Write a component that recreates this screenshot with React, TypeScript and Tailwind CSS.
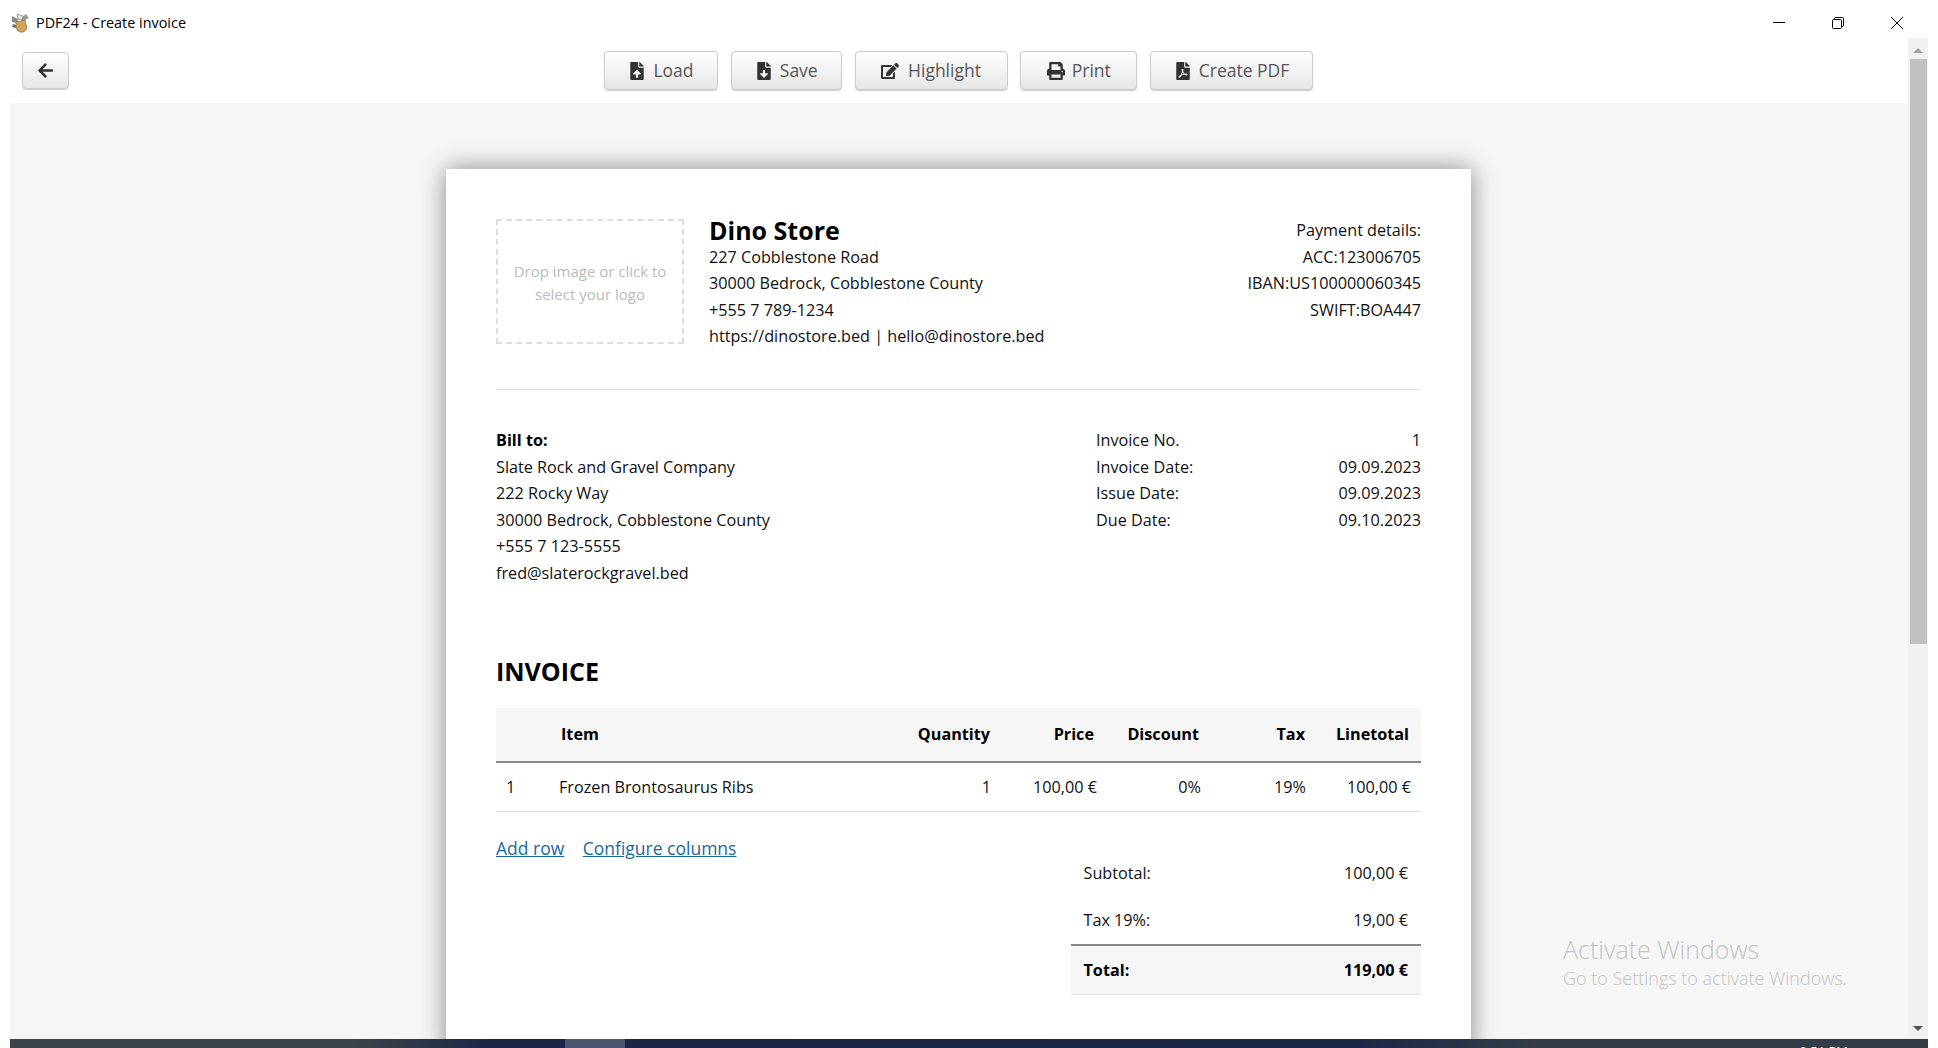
import React from 'react';
import { FaArrowLeft, FaEdit, FaFileDownload, FaFilePdf, FaFileUpload, FaPrint } from 'react-icons/fa';

const toolbarButtons = [
  { label: 'Load', icon: FaFileUpload, className: 'w-[114px] gap-[7px]' },
  { label: 'Save', icon: FaFileDownload, className: 'w-[111px] gap-[7px]' },
  { label: 'Highlight', icon: FaEdit, className: 'w-[153px] gap-[9px]' },
  { label: 'Print', icon: FaPrint, className: 'w-[117px] gap-[7px]' },
  { label: 'Create PDF', icon: FaFilePdf, className: 'w-[163px] gap-[7px]' },
];

const AppLogo = () => (
  <svg width="19" height="20" viewBox="0 0 19 20" className="shrink-0">
    <path d="M1 3 L7 6 L6 10 L1 9 Z" fill="#8a8a8a" />
    <path d="M15 1 L18 5 L12 8 L10 5 Z" fill="#9a9a9a" />
    <path d="M6 1 L12 3 L11 7 L7 6 Z" fill="#e6e6e6" stroke="#555" strokeWidth="0.5" />
    <path d="M5 9 L14 7 L16 15 Q14 20 9 19 Q5 18 5 13 Z" fill="#d3a35c" stroke="#7a5a2c" strokeWidth="0.6" />
    <path d="M2 11 L5 12 L5 15 L1 14 Z" fill="#6d6d6d" />
  </svg>
);

const ToolbarButton = ({ children, className }: { children: React.ReactNode; className: string }) => (
  <button className={`flex items-center justify-center rounded-[4px] border border-[#ccc] bg-gradient-to-b from-white to-[#e6e6e6] text-[17.5px] text-[#555] shadow-[0_1px_1px_rgba(0,0,0,0.2)] ${className}`}>
    {children}
  </button>
);

const metaRows = [
  ['Invoice No.', '1'],
  ['Invoice Date:', '09.09.2023'],
  ['Issue Date:', '09.09.2023'],
  ['Due Date:', '09.10.2023'],
];

const App = () => {
  return (
    <div className="h-screen w-full flex flex-col overflow-hidden bg-white font-['Open_Sans',sans-serif] text-[16.2px] leading-[26.5px] text-[#111]">
      {/* Title bar */}
      <div className="h-[38px] shrink-0 flex items-center pt-[8px] pl-[11px]">
        <AppLogo />
        <span className="ml-[6px] text-[14.4px] text-black">PDF24 - Create invoice</span>
        <div className="ml-auto flex items-center pr-[35px] gap-[47px]">
          <svg width="12" height="12" viewBox="0 0 12 12"><path d="M0 5.5H12" stroke="#000" /></svg>
          <svg width="12" height="12" viewBox="0 0 12 12" fill="none" stroke="#000">
            <rect x="0.5" y="2.5" width="9" height="9" rx="1" />
            <path d="M2.5 2.5V1.5a1 1 0 0 1 1-1h7a1 1 0 0 1 1 1v7a1 1 0 0 1-1 1h-1" />
          </svg>
          <svg width="12" height="12" viewBox="0 0 12 12"><path d="M0 0L12 12M12 0L0 12" stroke="#000" /></svg>
        </div>
      </div>

      <div className="flex-1 min-h-0 flex pl-[10px] pr-[10px]">
        <div className="flex-1 min-w-0 flex flex-col">
          {/* Toolbar */}
          <div className="h-[65px] shrink-0 relative flex items-start pt-[13px] pl-[12px]">
            <ToolbarButton className="w-[47px] h-[37px] mt-px">
              <FaArrowLeft className="text-[17px] text-[#333]" />
            </ToolbarButton>
            <div className="flex gap-[12.75px] ml-[535px]">
              {toolbarButtons.map(({ label, icon: Icon, className }) => (
                <ToolbarButton key={label} className={`h-[39px] ${className}`}>
                  <Icon className="text-[18px] text-[#333]" />
                  {label}
                </ToolbarButton>
              ))}
            </div>
          </div>

          {/* Scrolling document area */}
          <div className="flex-1 min-h-0 overflow-hidden relative bg-[#f6f6f6] pt-[66px]">
            <div className="w-[1025px] ml-[436px] bg-white px-[50px] pt-[48px] pb-[60px] shadow-[0_0_24px_rgba(0,0,0,0.45)]">
              <div className="flex items-start">
                <div className="mt-[2px] h-[125px] w-[188px] shrink-0 flex items-center justify-center border-2 border-dashed border-[#ddd] px-[12px] pt-[2px] text-center text-[15px] leading-[23px] text-[#bbb]">
                  Drop image or click to select your logo
                </div>
                <div className="ml-[25px]">
                  <div className="text-[25px] font-bold text-black">Dino Store</div>
                  <div>227 Cobblestone Road</div>
                  <div>30000 Bedrock, Cobblestone County</div>
                  <div>+555 7 789-1234</div>
                  <div>https://dinostore.bed | hello@dinostore.bed</div>
                </div>
                <div className="ml-auto text-right">
                  <div>Payment details:</div>
                  <div>ACC:123006705</div>
                  <div>IBAN:US100000060345</div>
                  <div>SWIFT:BOA447</div>
                </div>
              </div>

              <div className="mt-[39px] border-t border-[#e2e2e2]" />

              <div className="mt-[37.5px] flex items-start justify-between">
                <div>
                  <div className="font-bold text-black">Bill to:</div>
                  <div>Slate Rock and Gravel Company</div>
                  <div>222 Rocky Way</div>
                  <div>30000 Bedrock, Cobblestone County</div>
                  <div>+555 7 123-5555</div>
                  <div>fred@slaterockgravel.bed</div>
                </div>
                <div className="w-[325px]">
                  {metaRows.map(([label, value]) => (
                    <div key={label} className="flex justify-between">
                      <span>{label}</span>
                      <span>{value}</span>
                    </div>
                  ))}
                </div>
              </div>

              <h2 className="mt-[68.5px] text-[25px] font-bold leading-[32px] text-black">INVOICE</h2>

              <table className="mt-[21px] w-full table-fixed border-collapse">
                <colgroup>
                  <col className="w-[60px]" />
                  <col />
                  <col className="w-[105px]" />
                  <col className="w-[105px]" />
                  <col className="w-[105px]" />
                  <col className="w-[105px]" />
                  <col className="w-[105px]" />
                </colgroup>
                <thead>
                  <tr className="h-[54px] bg-[#f6f6f6] border-b-2 border-[#888] font-bold text-black">
                    <th />
                    <th className="text-left font-bold pl-[5px]">Item</th>
                    <th className="text-right font-bold pr-[11px]">Quantity</th>
                    <th className="text-right font-bold pr-[12px]">Price</th>
                    <th className="text-right font-bold pr-[12px]">Discount</th>
                    <th className="text-right font-bold pr-[11px]">Tax</th>
                    <th className="text-right font-bold pr-[12px]">Linetotal</th>
                  </tr>
                </thead>
                <tbody>
                  <tr className="h-[50px] border-b border-[#e2e2e2]">
                    <td className="pl-[10px]">1</td>
                    <td className="pl-[3px]">Frozen Brontosaurus Ribs</td>
                    <td className="text-right pr-[10px]">1</td>
                    <td className="text-right pr-[9px]">100,00 €</td>
                    <td className="text-right pr-[10px]">0%</td>
                    <td className="text-right pr-[10px]">19%</td>
                    <td className="text-right pr-[10px]">100,00 €</td>
                  </tr>
                </tbody>
              </table>

              <div className="flex items-start justify-between">
                <div className="mt-[23px] flex gap-[18.5px] text-[#1a6a9e]">
                  <a className="underline text-[17.5px]">Add row</a>
                  <a className="underline text-[17.5px]">Configure columns</a>
                </div>
                <div className="mt-[37px] w-[350px]">
                  <div className="h-[48px] flex items-center justify-between pl-[12.5px] pr-[13px]">
                    <span>Subtotal:</span>
                    <span>100,00 €</span>
                  </div>
                  <div className="h-[47px] flex items-center justify-between pl-[12.5px] pr-[13px]">
                    <span>Tax 19%:</span>
                    <span>19,00 €</span>
                  </div>
                  <div className="h-[51px] flex items-center justify-between pl-[12.5px] pr-[13px] bg-[#f6f6f6] border-t-2 border-t-[#888] border-b border-b-[#e2e2e2] font-bold text-black">
                    <span>Total:</span>
                    <span>119,00 €</span>
                  </div>
                </div>
              </div>
            </div>

            {/* Windows activation watermark */}
            <div className="absolute left-[1553px] top-[830px] font-['Open_Sans',sans-serif] font-light text-[#c2c2c2]">
              <div className="text-[25px] leading-[32px]">Activate Windows</div>
              <div className="text-[18px] leading-[26px] whitespace-nowrap">Go to Settings to activate Windows.</div>
            </div>
          </div>
        </div>

        {/* Scrollbar */}
        <div className="w-[20px] shrink-0 flex flex-col items-center bg-[#f1f1f1]">
          <div className="h-[21px] w-full flex items-center justify-center pt-[4px]">
            <div className="w-0 h-0 border-x-[5px] border-x-transparent border-b-[5px] border-b-[#a3a3a3]" />
          </div>
          <div className="h-[585px] w-[17px] bg-[#c1c1c1]" />
          <div className="mt-auto h-[21px] w-full flex items-center justify-center">
            <div className="w-0 h-0 border-x-[5px] border-x-transparent border-t-[5px] border-t-[#505050]" />
          </div>
        </div>
      </div>

      {/* Taskbar sliver cut off by the capture */}
      <div className="h-[9px] shrink-0 ml-[10px] mr-[10px] overflow-hidden flex bg-[linear-gradient(90deg,#3c4349_0%,#3c4349_18%,#1b2647_25%,#1b2747_70%,#343d47_80%,#343d47_100%)]">
        <div className="ml-[555px] w-[60px] h-full bg-[#4a556f]" />
        <div className="ml-auto mr-[80px] pt-[3px] text-[13px] leading-[18px] text-white">9:51 PM</div>
      </div>
    </div>
  );
};

export default App;
